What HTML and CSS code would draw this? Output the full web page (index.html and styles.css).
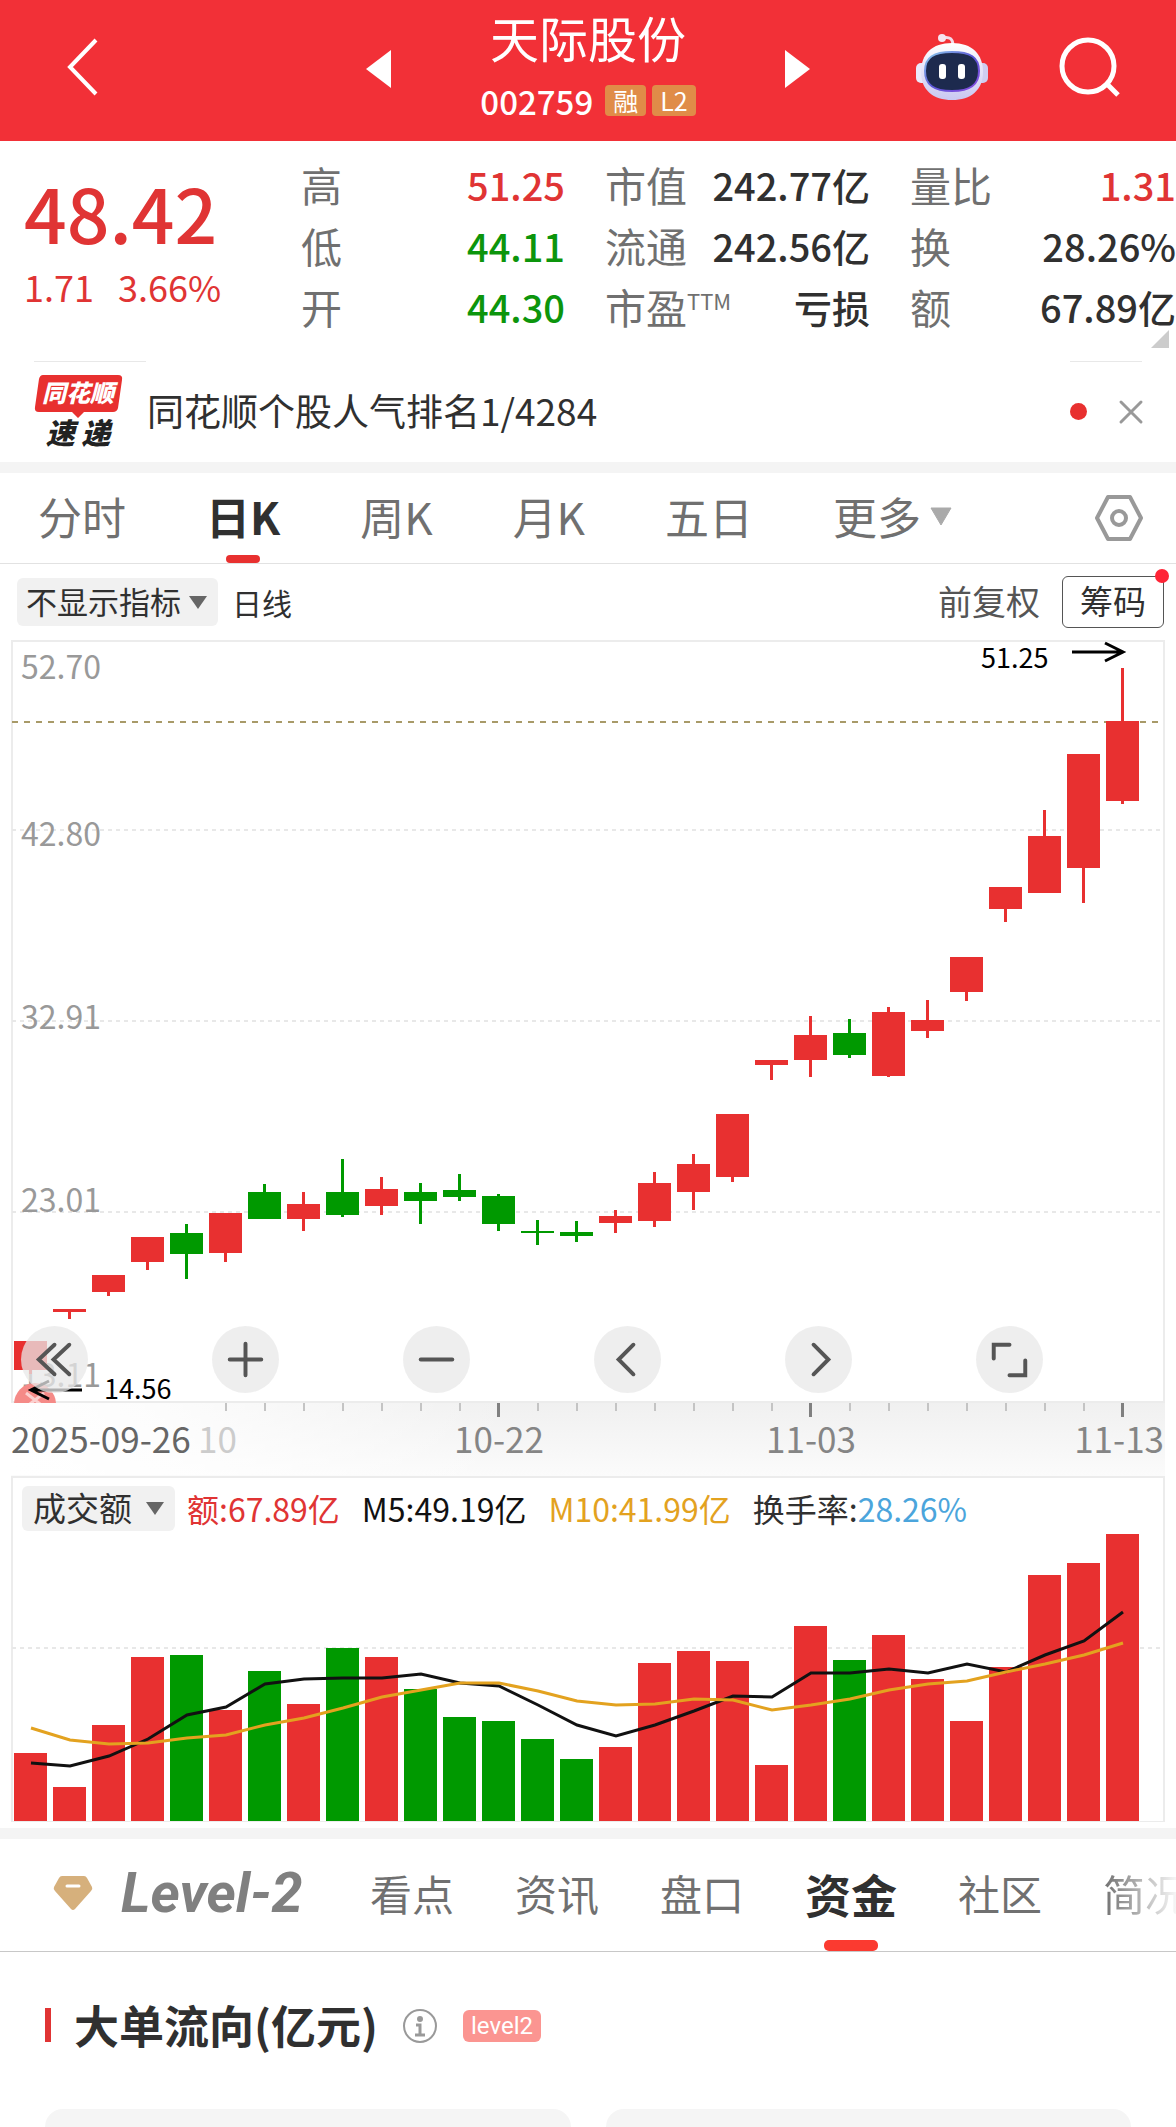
FILE: index.html
```html
<!DOCTYPE html>
<html lang="zh-CN">
<head>
<meta charset="utf-8">
<meta name="viewport" content="width=device-width, initial-scale=1">
<title>天际股份 002759</title>
<link rel="stylesheet" href="styles.css">
</head>
<body>
<div class="app">
  <header class="topbar">
    <button class="icon-btn back" aria-label="返回">
      <svg width="32" height="58" viewBox="0 0 32 58" fill="none" stroke="#fff" stroke-width="4"><path d="M29 2 3 29l26 27"/></svg>
    </button>
    <div class="stock">
      <button class="icon-btn" aria-label="上一只"><svg width="25" height="38" viewBox="0 0 25 38"><path d="M25 0v38L0 19z" fill="#fff"/></svg></button>
      <div class="stock-name">
        <h1>天际股份</h1>
        <p><span class="code">002759</span><span class="badge">融</span><span class="badge">L2</span></p>
      </div>
      <button class="icon-btn" aria-label="下一只"><svg width="25" height="38" viewBox="0 0 25 38"><path d="M0 0v38l25-19z" fill="#fff"/></svg></button>
    </div>
    <div class="actions">
      <button class="icon-btn" aria-label="智能助手">
        <svg width="74" height="68" viewBox="0 0 74 68">
          <defs>
            <linearGradient id="head" x1="0" y1="0" x2="0" y2="1"><stop offset="0" stop-color="#fff"/><stop offset=".6" stop-color="#dfdcf6"/><stop offset="1" stop-color="#c9c8f2"/></linearGradient>
            <linearGradient id="rim" x1="0" y1="0" x2="1" y2="1"><stop offset="0" stop-color="#8fd0ee"/><stop offset=".5" stop-color="#5a55d6"/><stop offset="1" stop-color="#8a4be0"/></linearGradient>
          </defs>
          <path d="M27 5c8-2 11 1 11 8" fill="none" stroke="#f3dbe8" stroke-width="3"/>
          <circle cx="27" cy="5" r="4" fill="#f6e4f0"/>
          <rect x="1" y="30" width="12" height="20" rx="5" fill="#eae9fa"/>
          <rect x="61" y="30" width="12" height="20" rx="5" fill="#cfcdf0"/>
          <path d="M37 10c20 0 31 11 31 29S56 67 37 67 6 57 6 39s11-29 31-29z" fill="url(#head)"/>
          <path d="M37 19c18 0 27 5 27 19s-9 20-27 20-27-6-27-20 9-19 27-19z" fill="#1d2a4e" stroke="url(#rim)" stroke-width="2"/>
          <rect x="24" y="31" width="7" height="15" rx="3" fill="#fff"/>
          <rect x="43" y="31" width="7" height="15" rx="3" fill="#fff"/>
        </svg>
      </button>
      <button class="icon-btn" aria-label="搜索">
        <svg width="62" height="62" viewBox="0 0 62 62" fill="none" stroke="#fff"><circle cx="29" cy="30" r="26" stroke-width="5"/><path d="m48 48 11 11" stroke-width="5"/></svg>
      </button>
    </div>
  </header>

  <section class="quote">
    <div class="price up">
      <strong>48.42</strong>
      <p><span>1.71</span><span>3.66%</span></p>
    </div>
    <dl>
      <div><dt>高</dt><dd class="up">51.25</dd></div>
      <div><dt>低</dt><dd class="down">44.11</dd></div>
      <div><dt>开</dt><dd class="down">44.30</dd></div>
    </dl>
    <dl>
      <div><dt>市值</dt><dd>242.77亿</dd></div>
      <div><dt>流通</dt><dd>242.56亿</dd></div>
      <div><dt>市盈<sup>TTM</sup></dt><dd>亏损</dd></div>
    </dl>
    <dl>
      <div><dt>量比</dt><dd class="up">1.31</dd></div>
      <div><dt>换</dt><dd>28.26%</dd></div>
      <div><dt>额</dt><dd>67.89亿</dd></div>
    </dl>
    <svg class="corner" width="18" height="18" viewBox="0 0 18 18"><path d="M18 0v18H0z" fill="#ccc"/></svg>
  </section>

  <section class="news">
    <svg width="90" height="76" viewBox="0 0 90 76" role="img" aria-label="同花顺速递">
      <path d="M9 1h75q5 0 4 5l-4 28q-1 4-5 4H50l-6 6-6-6H5q-5 0-4-5L5 5q1-4 4-4z" fill="#e8302f"/>
      <text x="44" y="28" class="logo-top">同花顺</text>
      <text x="44" y="70" class="logo-bottom">速 递</text>
    </svg>
    <a href="#rank">同花顺个股人气排名1/4284</a>
    <i class="dot"></i>
    <button class="icon-btn" aria-label="关闭"><svg width="26" height="26" viewBox="0 0 26 26" stroke="#999" stroke-width="3" stroke-linecap="round"><path d="m3 3 20 20M23 3 3 23"/></svg></button>
  </section>

  <nav class="periods">
    <a href="#min">分时</a>
    <a href="#day" class="active">日K</a>
    <a href="#week">周K</a>
    <a href="#month">月K</a>
    <a href="#five">五日</a>
    <a href="#more" class="more">更多<svg width="22" height="19" viewBox="0 0 22 19"><path d="M1 1h20L11 18z" fill="#aaa" stroke="#aaa" stroke-linejoin="round"/></svg></a>
    <button class="icon-btn settings" aria-label="设置">
      <svg width="50" height="48" viewBox="0 0 50 48" fill="none" stroke="#999" stroke-width="4" stroke-linejoin="round"><path d="M14 3h22l11 21-11 21H14L3 24z"/><circle cx="25" cy="24" r="7"/></svg>
    </button>
  </nav>

  <div class="tools">
    <div class="chip">
      <select aria-label="主图指标"><option>不显示指标</option></select>
      <svg width="18" height="13" viewBox="0 0 18 13"><path d="M0 0h18L9 13z" fill="#666"/></svg>
    </div>
    <span class="line-name">日线</span>
    <button class="adjust">前复权</button>
    <button class="chips-btn">筹码<i></i></button>
  </div>

  <section class="kline">
    <svg id="kline" class="chart" viewBox="0 640 1176 836">
      <defs>
        <linearGradient id="axisBg" x1="0" y1="0" x2="0" y2="1"><stop offset="0" stop-color="#f0f0f0"/><stop offset="1" stop-color="#fbfbfb"/></linearGradient>
        <linearGradient id="axisFade"><stop offset="0" stop-color="#fff"/><stop offset=".3" stop-color="#fff" stop-opacity=".8"/><stop offset="1" stop-color="#fff" stop-opacity="0"/></linearGradient>
        <clipPath id="plot"><path d="M11 640h1154v763H11z"/></clipPath>
      </defs>
      <path d="M11 1402h1154v74H11z" fill="url(#axisBg)"/>
      <path d="M11 1403h500v72H11z" fill="url(#axisFade)"/>
      <path class="frame" d="M12 641h1152v761H12z"/>
      <path class="grid" d="M12 830h1152M12 1021h1152M12 1212h1152"/>
      <path class="last-price" d="M12 722h1152"/>
      <g class="scale">
        <text x="21" y="679">52.70</text>
        <text x="21" y="846">42.80</text>
        <text x="21" y="1029">32.91</text>
        <text x="21" y="1212">23.01</text>
        <text x="21" y="1387">13.11</text>
      </g>
      <g clip-path="url(#plot)"><circle cx="35" cy="1404" r="21" fill="#f58a87"/><path d="m26 1393 18 14m0-14-18 14" stroke="#fff" stroke-width="3" opacity=".6"/></g>
      <g id="candles"></g>
      <g id="ticks"></g>
      <g class="marks">
        <text x="981" y="668">51.25</text>
        <path d="M1072 652h50m-17-9 18 9-18 9"/>
        <text x="104" y="1399">14.56</text>
        <path d="M82 1390H31m18-9-18 9 18 9"/>
      </g>
      <g class="dates">
        <text x="11" y="1453" class="first">2025-09-26</text>
        <text x="198" y="1453" class="faded">10</text>
        <text x="499" y="1453" text-anchor="middle">10-22</text>
        <text x="811" y="1453" text-anchor="middle">11-03</text>
        <text x="1164" y="1453" text-anchor="end">11-13</text>
      </g>
    </svg>
    <div class="controls">
      <button aria-label="最早"><svg viewBox="0 0 68 68"><path d="M34 19 18 34l16 15M49 19 33 34l16 15"/></svg></button>
      <button aria-label="放大"><svg viewBox="0 0 68 68"><path d="M34 18v32M18 34h32"/></svg></button>
      <button aria-label="缩小"><svg viewBox="0 0 68 68"><path d="M18 34h32"/></svg></button>
      <button aria-label="左移"><svg viewBox="0 0 68 68"><path d="M40 19 25 34l15 15"/></svg></button>
      <button aria-label="右移"><svg viewBox="0 0 68 68"><path d="m29 19 15 15-15 15"/></svg></button>
      <button aria-label="全屏"><svg viewBox="0 0 68 68"><path d="M18 33V19h16M50 35v15H34"/></svg></button>
    </div>
  </section>

  <section class="volume">
    <div class="legend">
      <div class="chip">
        <select aria-label="副图指标"><option>成交额</option></select>
        <svg width="18" height="13" viewBox="0 0 18 13"><path d="M0 0h18L9 13z" fill="#666"/></svg>
      </div>
      <span class="up">额:67.89亿</span>
      <span class="m5">M5:49.19亿</span>
      <span class="m10">M10:41.99亿</span>
      <span>换手率:<b>28.26%</b></span>
    </div>
    <svg class="chart" viewBox="13 1531 1150 290">
      <path class="grid" d="M12 1648h1152"/>
      <g id="bars"></g>
      <polyline id="m5" class="ma" stroke="#111"/>
      <polyline id="m10" class="ma" stroke="#e3a21f"/>
    </svg>
  </section>

  <nav class="sections">
    <a href="#level2" class="level2">
      <svg width="40" height="36" viewBox="0 0 40 36"><path d="M9 1h22q2 0 3 2l5 9q1 2-1 4L22 34q-2 2-4 0L2 16q-2-2-1-4l5-9q1-2 3-2z" fill="#d6b07c"/><path d="M14 11h12" stroke="#fff" stroke-width="3" stroke-linecap="round"/></svg>
      <span>Level-2</span>
    </a>
    <a href="#view">看点</a>
    <a href="#info">资讯</a>
    <a href="#book">盘口</a>
    <a href="#funds" class="active">资金</a>
    <a href="#community">社区</a>
    <a href="#profile" class="cut">简况</a>
  </nav>

  <section class="funds">
    <div class="funds-head">
      <h2>大单流向(亿元)</h2>
      <button class="icon-btn" aria-label="说明"><svg width="36" height="36" viewBox="0 0 36 36" fill="none" stroke="#999" stroke-width="2"><circle cx="18" cy="18" r="16"/><circle cx="18" cy="11" r="2" fill="#999"/><path d="M14 17h4v10m-5 0h10" stroke-width="3"/></svg></button>
      <span class="tag">level2</span>
    </div>
    <div class="cards"><div></div><div></div></div>
  </section>
</div>
<script src="script.js"></script>
</body>
</html>
```
FILE: styles.css
```css
* { box-sizing: border-box; }
body {
  margin: 0;
  background: #fff;
  color: #303030;
  font-family: "Noto Sans CJK SC", "Noto Sans", sans-serif;
  overflow-x: hidden;
}
h1, h2, p, dl, dd { margin: 0; }
a { color: inherit; text-decoration: none; }
button, select { font: inherit; color: inherit; border: 0; background: none; padding: 0; margin: 0; }
svg { display: block; overflow: visible; }
.app { min-height: 100vh; display: flex; flex-direction: column; }
.icon-btn { display: flex; }
.up { color: #e03434; }
.down { color: #0c950c; }

.topbar {
  display: grid;
  grid-template-columns: 1fr 444px 1fr;
  align-items: center;
  height: 141px;
  background: #f23037;
  color: #fff;
}
.back { margin-left: 67px; padding-bottom: 8px; }
.stock { display: flex; align-items: center; justify-content: space-between; padding-bottom: 4px; }
.stock-name { text-align: center; }
h1 { font-size: 49px; font-weight: 400; line-height: 64px; }
.stock-name p { display: flex; align-items: center; justify-content: center; gap: 6px; height: 64px; }
.code { font-size: 33px; font-weight: 500; line-height: 40px; margin-right: 6px; }
.badge { padding: 0 8px; background: #e08c48; border-radius: 4px; font-size: 25px; line-height: 31px; }
.actions { display: flex; align-items: center; justify-content: flex-end; gap: 70px; padding: 0 55px 8px 0; }

.quote {
  position: relative;
  display: grid;
  grid-template-columns: 277fr 264fr 305fr 306fr;
  padding: 13px 0 24px 24px;
}
.price strong { display: block; font-size: 75px; line-height: 88px; font-weight: 500; padding-top: 14px; }
.price p { display: flex; gap: 24px; font-size: 36px; line-height: 44px; padding-top: 8px; }
dl + dl { padding-left: 40px; }
dl div { display: flex; justify-content: space-between; line-height: 61px; white-space: nowrap; }
dt { font-size: 41px; color: #707070; }
dd { font-size: 38px; font-weight: 500; }
sup { font-size: 22px; line-height: 0; vertical-align: 14px; }
.corner { position: absolute; right: 7px; bottom: 13px; }

.news {
  position: relative;
  display: flex;
  align-items: center;
  height: 101px;
  padding: 0 32px 0 34px;
  gap: 23px;
  font-size: 37px;
  line-height: 50px;
}
.news::before, .news::after { content: ""; position: absolute; top: 0; height: 1px; background: #e8e8e8; }
.news::before { left: 34px; width: 112px; }
.news::after { right: 34px; width: 72px; }
.news a { flex: 1; padding-bottom: 4px; }
.logo-top, .logo-bottom { font-style: italic; font-weight: 900; text-anchor: middle; }
.logo-top { font-size: 24px; fill: #fff; }
.logo-bottom { font-size: 29px; fill: #222; }
.dot { width: 17px; height: 17px; border-radius: 50%; background: #e8302f; margin-right: 8px; }

.periods {
  display: flex;
  align-items: center;
  gap: 80px;
  height: 102px;
  padding: 0 32px 0 38px;
  border-top: 11px solid #f4f4f4;
  border-bottom: 1px solid #e2e2e2;
  font-size: 44px;
  line-height: 86px;
  color: #707070;
}
.periods a { padding-bottom: 4px; }
.active { position: relative; color: #303030; font-weight: 700; }
.active::after {
  content: "";
  position: absolute;
  left: 50%;
  bottom: 0;
  width: 34px;
  height: 8px;
  margin-left: -17px;
  border-radius: 4px;
  background: #e8302f;
}
.more { display: flex; align-items: center; gap: 9px; }
.settings { margin-left: auto; }

.tools { display: flex; align-items: center; height: 76px; padding: 0 12px 0 17px; }
.chip { display: grid; align-items: center; background: #f1f1f1; border-radius: 6px; }
.chip select { grid-area: 1 / 1; appearance: none; padding: 0 37px 2px 9px; font-size: 31px; line-height: 46px; height: 48px; }
.chip svg { grid-area: 1 / 1; justify-self: end; margin-right: 11px; pointer-events: none; }
.line-name { font-size: 30px; margin-left: 14px; }
.adjust { margin-left: auto; margin-right: 22px; padding-bottom: 4px; font-size: 34px; color: #555; }
.chips-btn { position: relative; width: 102px; height: 52px; border: 1px solid #555; border-radius: 6px; font-size: 33px; line-height: 46px; padding-bottom: 4px; }
.chips-btn i { position: absolute; top: -8px; right: -6px; width: 14px; height: 14px; border-radius: 50%; background: #ff2436; }

.kline { position: relative; }
.chart { width: 100%; height: auto; }
.frame { fill: none; stroke: #ececec; stroke-width: 2; }
.grid { fill: none; stroke: #e8e8e8; stroke-width: 2; stroke-dasharray: 4 4; }
.last-price { stroke: #a89a68; stroke-width: 2; stroke-dasharray: 6 6; }
.scale { font-size: 32px; fill: #999; }
.marks { font-size: 27px; fill: #000; }
.marks path { fill: none; stroke: #000; stroke-width: 3; }
.dates { font-size: 35px; fill: #858585; }
.dates .first { fill: #666; }
.dates .faded { fill: #ccc; }
.controls {
  position: absolute;
  left: 21px;
  right: 133px;
  bottom: 83px;
  display: flex;
  justify-content: space-between;
}
.controls button { width: 67px; height: 67px; border-radius: 50%; background: rgba(232, 232, 232, .75); }
.controls svg { width: 67px; height: 67px; fill: none; stroke: #555; stroke-width: 4; stroke-linecap: round; }

.volume { margin: 0 11px 6px; border: 2px solid #ececec; border-bottom-width: 1px; }
.legend { display: flex; align-items: center; gap: 22px; height: 53px; padding: 8px 9px 0; font-size: 32px; line-height: 44px; white-space: nowrap; }
.legend span { padding-bottom: 2px; }
.legend b { color: #4ba5dc; font-weight: 400; }
.legend .chip { margin-right: -10px; }
.legend .chip select { font-size: 33px; height: 45px; line-height: 43px; padding: 0 43px 2px 11px; }
.m5 { color: #111; }
.m10 { color: #e3a21f; }
.ma { fill: none; stroke-width: 3; }

.sections {
  display: flex;
  align-items: center;
  gap: 61px;
  height: 124px;
  padding-left: 53px;
  border-top: 11px solid #f4f4f4;
  border-bottom: 1px solid #c8c8c8;
  font-size: 42px;
  line-height: 108px;
  color: #707070;
  white-space: nowrap;
  overflow: hidden;
}
.sections a { padding-bottom: 4px; }
.sections .active { font-size: 46px; }
.sections .active::after { width: 54px; height: 11px; margin-left: -27px; border-radius: 5px; background: #fb3a30; }
.level2 { display: flex; align-items: center; gap: 28px; flex: 0 0 256px; }
.level2 span { font: italic 700 56px/108px Roboto, sans-serif; color: #808080; }
.cut { background: linear-gradient(90deg, #707070, #fff 78px); background-clip: text; -webkit-background-clip: text; color: transparent; }

.funds { display: flex; flex-direction: column; flex: 1; padding: 42px 45px 0; }
.funds-head { display: flex; align-items: center; height: 64px; }
h2 { display: flex; align-items: center; gap: 23px; font-size: 45px; line-height: 58px; padding-bottom: 2px; font-weight: 700; margin-right: 24px; }
h2::before { content: ""; width: 6px; height: 34px; background: #e03434; }
.tag { margin-left: 25px; padding: 0 8px; border-radius: 6px; background: #fb9591; color: #fff; font: 24px/32px Roboto, sans-serif; }
.cards { flex: 1; display: grid; grid-template-columns: 1fr 1fr; gap: 35px; margin-top: 51px; }
.cards div { background: #f5f5f5; border-radius: 18px 18px 0 0; }
```
FILE: script.js
```js
const RED = '#e83030';
const GREEN = '#009900';
const STEP = 39;
const FIRST = 31;

// [body top, body bottom, wick top, wick bottom, falling, turnover bar top]
const days = [
  [1341,1370,1341,1374,0,1753],[1309,1312,1309,1319,0,1787],[1275,1292,1275,1296,0,1725],
  [1237,1262,1237,1270,0,1657],[1233,1254,1224,1279,1,1655],[1213,1253,1213,1262,0,1710],
  [1192,1219,1184,1219,1,1671],[1204,1219,1192,1231,0,1704],[1192,1215,1159,1217,1,1648],
  [1189,1206,1177,1215,0,1657],[1192,1201,1183,1224,1,1689],[1190,1197,1174,1201,1,1717],
  [1196,1224,1194,1231,1,1721],[1231,1233,1220,1245,1,1739],[1232,1236,1221,1242,1,1759],
  [1216,1223,1210,1233,0,1747],[1183,1221,1172,1227,0,1663],[1164,1192,1154,1210,0,1651],
  [1114,1177,1114,1182,0,1661],[1060,1065,1060,1080,0,1765],[1035,1060,1016,1077,0,1626],
  [1033,1055,1019,1058,1,1660],[1012,1076,1007,1077,0,1635],[1020,1031,1000,1038,0,1679],
  [957,992,957,1001,0,1721],[887,909,887,922,0,1667],[836,893,810,893,0,1575],
  [754,868,754,903,0,1563],[721,801,668,804,0,1534]
];
const m5 = [1763,1766,1756,1739,1715,1707,1684,1679,1678,1678,1674,1683,1686,1705,1725,1736,1725,1711,1696,1697,1673,1673,1669,1673,1664,1672,1655,1641,1612];
const m10 = [1728,1740,1744,1743,1738,1735,1725,1718,1708,1697,1690,1683,1683,1691,1701,1705,1704,1699,1700,1710,1705,1699,1690,1684,1681,1672,1664,1655,1643];
const majorTicks = [12, 20, 28];

const rect = (x, y, w, h, fill) =>
  `<rect x="${x}" y="${y}" width="${w}" height="${h}" fill="${fill}"/>`;

let candles = '';
let bars = '';
let ticks = '';
days.forEach(([top, bottom, high, low, falling, barTop], i) => {
  const x = FIRST + i * STEP;
  const color = falling ? GREEN : RED;
  candles += rect(x - 17, top, 33, bottom - top, color) + rect(x - 2, high, 3, low - high, color);
  bars += rect(x - 17, barTop, 33, 1821 - barTop, color);
  if (i >= 5) {
    ticks += majorTicks.includes(i)
      ? rect(x - 2, 1403, 3, 14, '#808080')
      : rect(x - 1, 1403, 2, 8, '#c4c4c4');
  }
});
document.getElementById('candles').innerHTML = candles;
document.getElementById('bars').innerHTML = bars;
document.getElementById('ticks').innerHTML = ticks;

const points = values => values.map((y, i) => `${FIRST + i * STEP},${y}`).join(' ');
document.getElementById('m5').setAttribute('points', points(m5));
document.getElementById('m10').setAttribute('points', points(m10));
```
